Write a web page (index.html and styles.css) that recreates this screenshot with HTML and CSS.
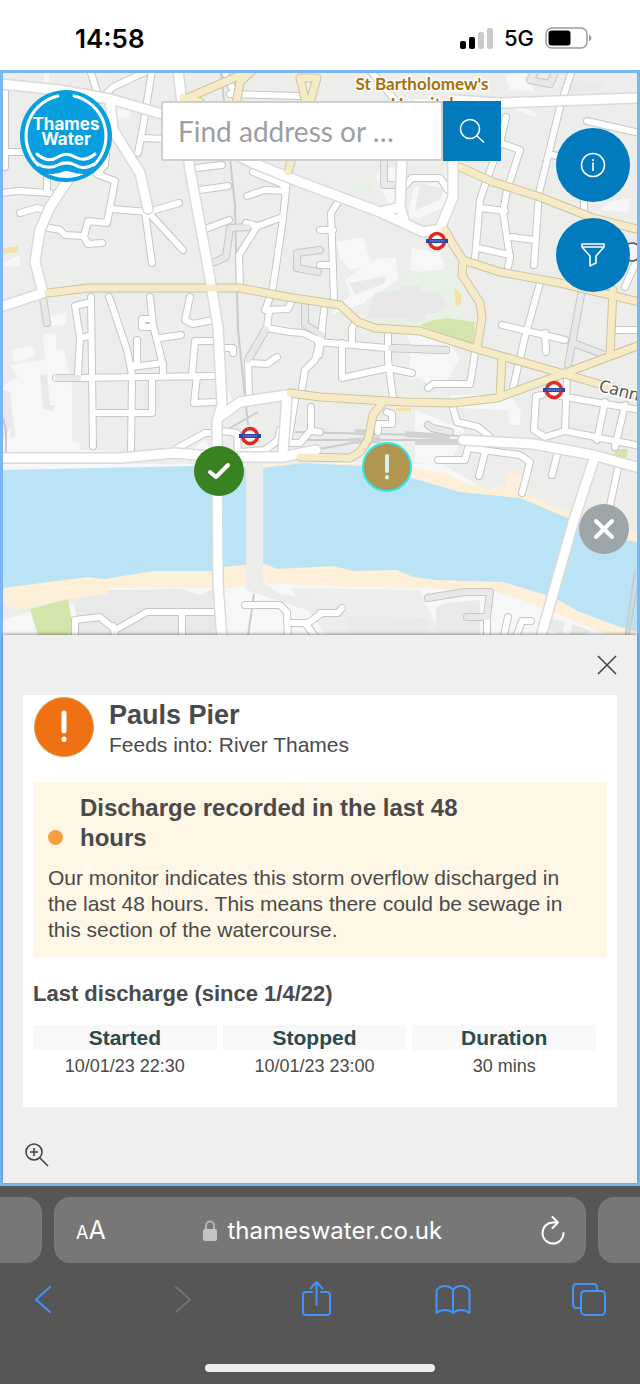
FILE: index.html
```html
<!DOCTYPE html>
<html lang="en">
<head>
    <title>Thames Water storm discharge map</title>
    <meta charset="UTF-8">
    <meta name="viewport" content="width=device-width, initial-scale=1">
    <link rel="stylesheet" href="styles.css">
</head>
<body>
    <header class="status-bar">
        <span class="clock">14:58</span>
        <div class="status-right">
            <svg width="33" height="21" viewBox="0 0 33 21">
                <rect x="0" y="13" width="6" height="8" rx="2"/>
                <rect x="9" y="9" width="6" height="12" rx="2"/>
                <rect x="18" y="4" width="6" height="17" rx="2" fill="#cbcbcb"/>
                <rect x="27" y="0" width="6" height="21" rx="2" fill="#cbcbcb"/>
            </svg>
            <span class="network">5G</span>
            <svg width="47" height="22" viewBox="0 0 47 22">
                <rect x="1" y="1" width="41" height="20" rx="6" fill="none" stroke="#9b9b9b" stroke-width="1.5"/>
                <rect x="3.5" y="3.5" width="22" height="15" rx="3"/>
                <path d="M44 7.5Q46.5 9 46.5 11T44 14.5Z" fill="#9b9b9b"/>
            </svg>
        </div>
    </header>

    <main class="page">
        <section class="map">
            <svg class="map-canvas" viewBox="3 73 634 562" preserveAspectRatio="xMidYMid slice">
                <defs>
                    <g id="minor-roads">
                        <path d="M5 90V167M90 70L98 95M145 72L113 87L100 100M152 70L143 127L138 153M143 138L165 139M3 152H25M0 193L18 191L50 193M47 175V193M20 213L37 208L44 210"/>
                        <path d="M106 155L105 165L97 174L115 181L107 223L88 221L84 237L88 244L102 243M84 236L65 235L60 230L45 227M112 209L148 212L179 203M145 212L152 263M148 212L183 250"/>
                        <path d="M196 168L222 165M200 190L228 186M208 228L229 220M253 172L280 183L286 187M247 196L265 190L285 191M287 180L283 218L276 267L272 292L265 310L288 309L292 300M269 312L267 327L248 360L249 395M267 328L290 332L303 333L322 342M250 363L267 364L277 357"/>
                        <path d="M246 223L258 226L280 218M256 228L239 255L240 287M230 94L300 96M224 70L232 88"/>
                        <path d="M91 297L93 446M91 302L75 306L80 337L78 375M80 338L90 336M109 297L112 305L127 350L132 375L131 450M56 378H75L213 376M93 413H152L152 378M150 297L153 325L163 365V376M160 338L181 335M153 327H142V319H150M137 340V363L132 367L163 363M190 297L185 320L193 324L213 320M213 341H195L192 375M197 376L194 403L217 402M220 348H233V353"/>
                        <path d="M176 449L205 433H215M222 431L237 433L238 452L265 450L278 440L280 430M295 400L288 443H300L311 430V407M311 431L320 432M322 332L315 360L305 370L302 388"/>
                        <path d="M506 117L500 143L520 150L507 190L503 212L510 258M500 143L485 185L480 200L475 258M481 208L505 211M478 248L510 255M511 237L535 240M572 70L560 107L539 193L534 265M502 325L565 340M545 333L546 352M540 283L525 337L513 388M587 121L640 133M553 155L565 158M584 195V212M625 287L636 262M618 330H640"/>
                        <path d="M555 395L600 403L640 410M542 395L536 396L534 430L545 437L565 431L640 446M567 378L565 430M605 402L597 440M625 405L615 447"/>
                        <path d="M338 202L331 213L334 298M320 230H333M320 265H333M448 190L440 178H412L403 188M318 342L388 348L446 350M342 343V378L388 368L412 373M388 335V360L393 398M356 322L352 328V342M428 388L433 384L470 384L475 353M324 310L319 355"/>
                        <path d="M387 412L392 414V424H378V432M453 408L457 422L478 427L490 437M438 460H465L468 448L520 455L530 462L522 493M485 452L479 476M557 455L552 475M618 468L608 515M508 267L510 258M370 70L395 100"/>
                        <path d="M75 636V620L100 617L115 630L147 612H215M182 612V640M113 626L115 636M245 605H280L287 612L288 640M290 623H308L322 613M305 623L318 640M320 613H338L342 608M508 617L503 640M531 621H522L515 640M487 617V640"/>
                    </g>
                    <g id="grey-roads">
                        <path d="M248 227L230 228L226 257L215 262M320 250L297 253V268L318 272M43 298L47 323M58 378H78M582 290L568 365M573 343L605 355M391 348L446 350M428 425L432 428L450 432M266 329L248 360M305 305V325L322 335"/>
                        <path d="M428 598L465 592H490L487 617H467M384 158V185H400M536 70L530 80L550 84L556 70"/>
                    </g>
                    <g id="main-roads">
                        <path d="M0 84L60 90L110 99L162 114L205 140L253 163L300 182L380 212L423 232L440 229L453 197V155M110 100L113 130L140 173L148 209M402 155L400 210M380 212L400 207L404 220"/>
                        <path d="M178 70L190 170L208 267L218 327L222 405L217 422V455L218 583L222 640"/>
                        <path d="M68 180L50 207L40 230L35 262L43 293L0 307M287 395L240 402L222 415M287 395L283 453M463 440L533 444L593 455L640 468M593 462L573 523L540 640"/>
                        <path d="M454 100L500 103L640 98"/>
                        <path d="M0 458H120L175 453L220 457H283L316 450"/>
                    </g>
                    <g id="yellow-roads">
                        <path d="M48 293L88 288H240L287 297L340 305L358 322L375 328L420 331L480 350L568 375L640 396"/>
                        <path d="M290 393L320 397L403 402L453 403L497 398L568 372L640 345M460 167L493 182L540 197L593 218L640 230"/>
                        <path d="M445 230L452 243L463 260L462 275L480 303L482 318L477 348M463 260L500 272L560 283L640 302M613 290L610 355M502 357L500 397"/>
                        <path d="M383 402L373 415L368 440L360 452L350 458L300 457M183 100L245 73M255 68L240 82L236 105M183 97L200 102M300 78H317L311 99H305ZM292 158L288 172"/>
                    </g>
                    <g id="roundel">
                        <circle r="7.5" fill="#fff" stroke="#e1291f" stroke-width="3.5"/>
                        <rect x="-11" y="-2" width="22" height="4" fill="#2745a5"/>
                        <path d="M-7 0H7" stroke="#93a3d6" stroke-width="1" stroke-dasharray="1.5 .7"/>
                    </g>
                </defs>
                <rect x="0" y="70" width="640" height="570" fill="#ededec"/>

                <!-- building plots -->
                <g fill="#f7f7f7">
                    <path d="M43 335L56 333V349L64 350L72 385V441L80 443V450L103 451V458H3V385L18 377L10 365L45 360Z"/>
                    <path d="M11 350L33 346L35 356L14 362ZM50 316L66 313V324L52 326ZM3 263L20 255V265L5 267ZM107 105L130 110V117L112 119ZM45 73H50L48 85H43Z"/>
                    <path d="M337 242L363 237L372 265L350 270L340 258ZM373 260L396 257L398 285L372 300L330 315L350 295L345 280ZM376 178L380 170L402 165L400 200L390 207ZM414 187L450 180L448 205L420 218L408 218ZM403 333L425 332L450 345L460 357L445 385H430L420 378H410V340ZM450 395L510 395L521 411L520 425H510L508 410L455 408ZM415 410L465 430L450 465L415 463Z"/>
                    <path d="M3 464H290L360 462L380 466L440 463L460 475L470 480L500 500L3 480ZM505 75L525 70L535 92L510 90ZM513 108L538 118L535 113L512 103ZM610 202L630 198L628 212L600 210ZM228 391L235 404H225ZM180 458L205 440L212 455Z"/>
                    <path d="M3 620L30 612L72 605L110 586L220 583H320L490 590L540 605L640 636H440L420 590L290 588L330 640H3Z"/>
                    <path d="M412 248L440 253L445 267L435 275L410 270Z"/>
                </g>
                <g fill="#e9e9e8">
                    <path d="M40 375L47 374L50 405H55L54 411L43 409ZM73 600L110 590L180 589L200 595L215 588V636H80ZM348 616L428 618V640H347ZM446 603L436 608V640H480V600ZM12 425L10 437H15L10 392L3 390V440Z"/>
                    <path d="M565 92L580 80L605 84L600 90ZM350 283L385 276V283L355 295ZM415 210L440 200L445 188L420 184ZM405 300L415 295V320L402 318ZM550 618L565 622L562 634L548 630ZM572 624L590 630L585 636H570Z"/>
                </g>
                <path d="M404 275L430 270L455 270L460 305L470 335L420 326L366 320V300L385 289Z" fill="#e7f1e6"/>
                <path d="M375 293L402 290V286H420V292L440 293L447 303L440 312L425 314V320L407 321V318L366 318Z" fill="#e6e7e6"/>
                <path d="M420 325L434 320L447 318L475 322L473 344L440 334Z" fill="#d3e5aa"/>
                <path d="M354 184L373 186V194L360 190Z" fill="#e2f1e0"/>
                <path d="M454 288L461 294V304L456 307ZM396 408H411V411H396ZM3 248L18 246V252L3 254Z" fill="#f6dfa9"/>
                <path d="M616 449L628 449L626 458L614 455Z" fill="#d3e5aa"/>

                <!-- river and foreshore -->
                <path d="M3 470L195 466L260 465L303 463L363 464L412 467L445 473L465 483L492 490L495 485L505 487L508 472L522 474L523 490L540 500L565 511L573 508L640 535V640H620L560 615L500 592L420 588L320 586L270 583L232 588L110 588L107 594L70 599L12 610L3 600Z" fill="#fdefd8"/>
                <path d="M3 470L195 466L263 468L303 463L363 466L412 478L460 492L520 498L570 519L627 540L640 543V633L620 627L580 612L553 597L503 582L437 580L413 577L397 570L353 571L333 566L277 569L263 563L223 567L213 571H153L105 579L87 577L3 588Z" fill="#bae4f5"/>
                <path d="M30 609L68 599L74 632L65 636H38Z" fill="#d3e5aa"/>
                <path d="M246 460H263V582L278 593L320 602V613L300 608L246 590Z" fill="#ececeb"/>
                <path d="M221 73L235 205L238 330L248 425M254 594L248 636M3 418L6 430V458M230 428L258 412M635 570L625 640M640 573L628 640" class="rail"/>
                <path d="M295 432L463 436M295 440L463 440M320 449L372 439" class="rail"/>
                <path d="M355 432L380 433M350 441L380 440M405 434L450 437M415 442H463" stroke="#d2d2d2" stroke-width="6"/>

                <use href="#minor-roads" class="road minor-casing"/>
                <use href="#grey-roads" class="road minor-casing"/>
                <use href="#minor-roads" class="road minor-fill"/>
                <use href="#grey-roads" class="road grey-fill"/>
                <use href="#main-roads" class="road main-casing"/>
                <use href="#yellow-roads" class="road yellow-casing"/>
                <use href="#main-roads" class="road main-fill"/>
                <use href="#yellow-roads" class="road yellow-fill"/>

                <use href="#roundel" x="437" y="241"/>
                <use href="#roundel" x="554" y="390"/>
                <use href="#roundel" x="250" y="436"/>
                <circle cx="632" cy="252" r="9" fill="#f5f5f5" stroke="#555" stroke-width="1.5"/>
                <text class="map-label place" x="422" y="90">St Bartholomew's</text>
                <text class="map-label place" x="422" y="110">Hospital</text>
                <text class="map-label street" transform="translate(598 391) rotate(14)">Canno</text>
            </svg>

            <svg class="logo" viewBox="0 0 92 92" role="img" aria-label="Thames Water">
                <circle cx="46" cy="46" r="46" fill="#089fe0"/>
                <g fill="none" stroke="#fff" stroke-width="3" stroke-linecap="round">
                    <path d="M38 6A41 41 0 0 0 18 75M54 6A41 41 0 0 1 74 75"/>
                    <path d="M17 64C25 71 32 71 38 67C44 63 49 63 55 67C62 71 69 69 75 64M18 74C26 79 32 78 38 75C44 72 49 72 55 75C61 79 68 78 74 74"/>
                </g>
                <path d="M28 84Q37 84 42 82Q46 80 51 82Q57 84 64 84Q47 92 28 84Z" fill="#fff"/>
                <text x="46" y="40">Thames</text>
                <text x="46" y="55">Water</text>
            </svg>

            <form class="search">
                <input type="text" aria-label="Find address or place" placeholder="Find address or …">
                <button type="submit" aria-label="Search">
                    <svg width="26" height="26" viewBox="0 0 26 26"><circle cx="11" cy="11" r="9.5"/><path d="M17.5 17.5L25 24.5"/></svg>
                </button>
            </form>

            <div class="map-tools">
                <button aria-label="Information">
                    <svg width="26" height="26" viewBox="0 0 26 26"><circle cx="13" cy="13" r="11.5"/><path d="M13 10.5V19M13 7V9"/></svg>
                </button>
                <button aria-label="Filter">
                    <svg width="26" height="26" viewBox="0 0 26 26"><path d="M2 2H24V5L16 14V21L10 24V14L2 5ZM2 5H24"/></svg>
                </button>
            </div>

            <button class="pin pin-ok" aria-label="Not discharging">
                <svg width="24" height="24" viewBox="0 0 24 24"><path d="M3 13L9 18L21 6"/></svg>
            </button>
            <button class="pin pin-recent" aria-label="Pauls Pier">
                <svg width="24" height="30" viewBox="0 0 24 30"><path d="M12 4V19M12 25V25.5"/></svg>
            </button>
            <button class="pin pin-offline" aria-label="Monitor offline">
                <svg width="24" height="24" viewBox="0 0 24 24"><path d="M4 4L20 20M20 4L4 20"/></svg>
            </button>
        </section>

        <section class="panel">
            <div class="panel-top">
                <button class="icon-button" aria-label="Close">
                    <svg width="20" height="20" viewBox="0 0 20 20"><path d="M1 1L19 19M19 1L1 19"/></svg>
                </button>
            </div>
            <article class="card">
                <div class="site">
                    <svg width="60" height="60" viewBox="0 0 60 60">
                        <circle cx="30" cy="30" r="29.5" fill="#f07014" stroke="#d8a04c"/>
                        <path d="M30 16V34M30 42V42.5" stroke="#fff" stroke-width="5" stroke-linecap="round"/>
                    </svg>
                    <div class="site-text">
                        <h1>Pauls Pier</h1>
                        <p>Feeds into: River Thames</p>
                    </div>
                </div>
                <div class="alert">
                    <div class="alert-title">
                        <span class="dot"></span>
                        <h2>Discharge recorded in the last 48 hours</h2>
                    </div>
                    <p>Our monitor indicates this storm overflow discharged in the last 48 hours. This means there could be sewage in this section of the watercourse.</p>
                </div>
                <h3 id="last-discharge">Last discharge (since 1/4/22)</h3>
                <table aria-labelledby="last-discharge">
                    <thead>
                        <tr><th>Started</th><th>Stopped</th><th>Duration</th></tr>
                    </thead>
                    <tbody>
                        <tr><td>10/01/23 22:30</td><td>10/01/23 23:00</td><td>30 mins</td></tr>
                    </tbody>
                </table>
            </article>
            <button class="icon-button zoom-to" aria-label="Zoom to">
                <svg width="24" height="24" viewBox="0 0 24 24"><circle cx="9" cy="9" r="8"/><path d="M15 15L23 23M5 9H13M9 5V13"/></svg>
            </button>
        </section>
    </main>

    <footer class="browser">
        <div class="tabs">
            <div class="tab tab-edge"></div>
            <div class="tab address">
                <button class="text-size" aria-label="Text size"><small>A</small>A</button>
                <div class="url">
                    <svg width="14" height="21" viewBox="0 0 14 21"><rect y="9" width="14" height="12" rx="2" fill="#c4c4c4"/><path d="M3 9V5.5A4 4 0 0 1 11 5.5V9" fill="none" stroke="#b3b3b3" stroke-width="2"/></svg>
                    <span>thameswater.co.uk</span>
                </div>
                <button aria-label="Reload">
                    <svg width="26" height="30" viewBox="0 0 26 30"><path d="M17.5 7.5H13A10.5 10.5 0 1 0 23.5 18M12.5 2L18 7.5L12.5 13" fill="none" stroke="#fff" stroke-width="2" stroke-linecap="round" stroke-linejoin="round"/></svg>
                </button>
            </div>
            <div class="tab tab-edge"></div>
        </div>
        <nav class="toolbar">
            <button aria-label="Back"><svg width="36" height="38" viewBox="0 0 36 38"><path d="M25 7L11 19.5L25 32"/></svg></button>
            <button aria-label="Forward" disabled><svg width="36" height="38" viewBox="0 0 36 38"><path d="M14 7L28 19.5L14 32"/></svg></button>
            <button aria-label="Share"><svg width="36" height="38" viewBox="0 0 36 38"><path d="M14 12H8Q5 12 5 15V32Q5 35 8 35H29Q32 35 32 32V15Q32 12 29 12H23M18.500 25V3M12.5 8.500L18.500 2L24.500 8.500"/></svg></button>
            <button aria-label="Bookmarks"><svg width="36" height="38" viewBox="0 0 36 38"><path d="M18 33V10Q15 6 10 6T1.5 10V33Q5 30 10 30T18 33Q21 30 26 30T34.500 33V10Q31 6 26 6T18 10"/></svg></button>
            <button aria-label="Tabs"><svg width="36" height="38" viewBox="0 0 36 38"><path d="M10 28H6Q2 28 2 24V8Q2 4 6 4H22Q26 4 26 8V11"/><rect x="10" y="11" width="24" height="24" rx="4"/></svg></button>
        </nav>
        <div class="home-bar"></div>
    </footer>
</body>
</html>
```
FILE: styles.css
```css
* {
    box-sizing: border-box;
}
body {
    margin: 0;
    min-height: 100vh;
    display: flex;
    flex-direction: column;
    background: #fff;
    color: #4a4a4a;
    font-family: "Liberation Sans", Arial, sans-serif;
}
h1, h2, h3, p {
    margin: 0;
}
button {
    padding: 0;
    border: none;
    background: none;
    color: inherit;
    font-family: inherit;
    display: flex;
    align-items: center;
    justify-content: center;
    cursor: pointer;
}
svg {
    display: block;
    flex-shrink: 0;
}

/* phone status bar */
.status-bar {
    height: 70px;
    padding: 6px 48px 0 75px;
    display: flex;
    align-items: center;
    justify-content: space-between;
    color: #000;
    font-family: Inter, sans-serif;
}
.clock {
    font-size: 26px;
    font-weight: 600;
}
.status-right {
    display: flex;
    align-items: center;
    gap: 11px;
}
.network {
    font-size: 22px;
    font-weight: 500;
}

.page {
    flex-grow: 1;
    display: flex;
    flex-direction: column;
    border: 3px solid #7ab6f6;
}

/* map */
.map {
    position: relative;
    flex-grow: 1;
    min-height: 480px;
    overflow: hidden;
}
.map-canvas {
    position: absolute;
    width: 100%;
    height: 100%;
}
.rail {
    fill: none;
    stroke: #cbcbcb;
    stroke-width: 2;
}
.road {
    fill: none;
    stroke-linecap: round;
    stroke-linejoin: round;
}
.minor-casing {
    stroke: #c6c6c6;
    stroke-width: 8;
}
.minor-fill {
    stroke: #fff;
    stroke-width: 6;
}
.grey-fill {
    stroke: #e8e8e8;
    stroke-width: 6;
}
.main-casing {
    stroke: #dadada;
    stroke-width: 12;
}
.main-fill {
    stroke: #fff;
    stroke-width: 9;
}
.yellow-casing {
    stroke: #cdc39e;
    stroke-width: 9;
}
.yellow-fill {
    stroke: #f6ebc6;
    stroke-width: 7;
}
.map-label {
    paint-order: stroke;
    stroke: #fff;
    stroke-width: 3px;
}
.place {
    fill: #a86f0c;
    font: 700 17px Lato, sans-serif;
    text-anchor: middle;
}
.street {
    fill: #555;
    font: 17px "Noto Sans", sans-serif;
}
.logo {
    position: absolute;
    top: 17px;
    left: 17px;
    width: 92px;
    height: 92px;
}
.logo text {
    fill: #fff;
    font: 700 17px Inter, sans-serif;
    text-anchor: middle;
}
.search {
    position: absolute;
    top: 28px;
    left: 158px;
    width: 340px;
    height: 60px;
    display: flex;
}
.search input {
    flex-grow: 1;
    min-width: 0;
    padding: 0 15px;
    border: 2px solid #cfcfcf;
    border-radius: 3px;
    background: #fff;
    font: 28px Lato, sans-serif;
}
.search input::placeholder {
    color: #9b9f9f;
    opacity: 1;
}
.search button {
    flex-shrink: 0;
    width: 58px;
    background: #017bbd;
}
.search svg, .map-tools svg {
    fill: none;
    stroke: #fff;
    stroke-width: 1.6;
    stroke-linejoin: round;
}
.map-tools {
    position: absolute;
    top: 55px;
    right: 7px;
    display: flex;
    flex-direction: column;
    gap: 16px;
}
.map-tools button {
    width: 74px;
    height: 74px;
    border-radius: 50%;
    background: #017bbd;
}
.pin {
    position: absolute;
    width: 50px;
    height: 50px;
    border-radius: 50%;
}
.pin svg {
    fill: none;
    stroke: #fff;
    stroke-width: 4;
    stroke-linecap: round;
    stroke-linejoin: round;
}
.pin-ok {
    left: 191px;
    top: 373px;
    background: #3a8122;
}
.pin-recent {
    left: 359px;
    top: 369px;
    background: #b0964e;
    border: 2px solid #2be9ea;
}
.pin-recent svg {
    stroke: #d6f3ee;
}
.pin-offline {
    left: 576px;
    top: 431px;
    background: #9ea5a9;
}

/* details panel */
.panel {
    position: relative;
    padding: 0 20px 16px;
    background: #efefef;
    box-shadow: 0 -1px 3px rgba(0, 0, 0, 0.4);
}
.panel-top {
    height: 60px;
    display: flex;
    align-items: center;
    justify-content: flex-end;
}
.icon-button svg {
    fill: none;
    stroke: #444;
    stroke-width: 1.6;
}
.zoom-to {
    margin: 36px 0 0 2px;
}
.card {
    padding: 2px 10px 30px;
    background: #fff;
}
.site {
    display: flex;
    gap: 15px;
    padding-left: 1px;
}
.site-text {
    padding-top: 1px;
}
.site h1 {
    font-size: 27px;
    line-height: 34px;
}
.site p {
    font-size: 21px;
    line-height: 26px;
}
.alert {
    margin-top: 24px;
    padding: 11px 15px 14px;
    background: #fff7e5;
}
.alert-title {
    display: flex;
    align-items: flex-end;
    gap: 17px;
    margin-bottom: 12px;
}
.dot {
    width: 15px;
    height: 15px;
    margin-bottom: 8px;
    border-radius: 50%;
    background: #f99d41;
}
.alert h2 {
    max-width: 400px;
    font-size: 24px;
    line-height: 30px;
}
.alert p {
    font-size: 21px;
    line-height: 26px;
}
.card h3 {
    margin: 24px 0 12px;
    font-size: 22px;
    line-height: 26px;
}
table {
    width: calc(100% + 1px);
    margin-left: -6px;
    border-spacing: 6px 0;
    padding-top: 6px;
    table-layout: fixed;
    text-align: center;
}
th {
    padding: 0;
    background: #f8f8f8;
    color: #2b4a4b;
    font-size: 21px;
    line-height: 25px;
}
td {
    padding: 5px 0 0;
    font-size: 18px;
    line-height: 22px;
}

/* browser chrome */
.browser {
    padding: 11px 0 12px;
    background: #565656;
    color: #fff;
    font-family: Inter, sans-serif;
}
.tabs {
    display: flex;
    gap: 12px;
}
.tab {
    height: 66px;
    border-radius: 16px;
    background: #777;
}
.tab-edge {
    width: 42px;
}
.tab-edge:first-child {
    border-radius: 0 16px 16px 0;
}
.tab-edge:last-child {
    border-radius: 16px 0 0 16px;
}
.address {
    flex-grow: 1;
    display: flex;
    align-items: center;
    justify-content: space-between;
    padding: 0 20px 0 22px;
}
.text-size {
    align-items: baseline;
    font-size: 25px;
}
.text-size small {
    font-size: 18px;
}
.url {
    display: flex;
    align-items: center;
    gap: 10px;
    font-size: 24px;
}
.toolbar {
    display: flex;
    justify-content: space-between;
    padding: 17px 33px 0 25px;
}
.toolbar svg {
    fill: none;
    stroke: #4293fc;
    stroke-width: 2;
    stroke-linecap: round;
    stroke-linejoin: round;
}
.toolbar button:disabled svg {
    stroke: #737373;
}
.home-bar {
    width: 36%;
    height: 8px;
    margin: 46px auto 0;
    border-radius: 4px;
    background: #eee;
}
```
